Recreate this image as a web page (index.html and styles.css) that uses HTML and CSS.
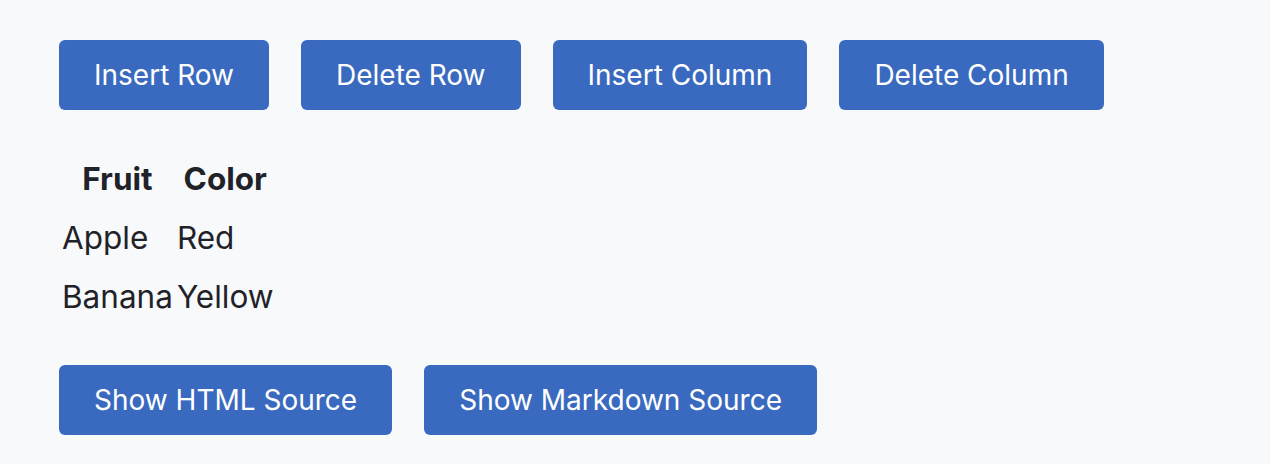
FILE: index.html
```html
<!DOCTYPE html>
<html>
<head>
<meta charset="utf-8">
<link rel="stylesheet" href="styles.css">
</head>
<body>
<div class="page">
  <div class="toolbar">
    <button class="btn">Insert Row</button>
    <button class="btn">Delete Row</button>
    <button class="btn">Insert Column</button>
    <button class="btn">Delete Column</button>
  </div>
  <table class="grid">
    <thead>
      <tr><th>Fruit</th><th>Color</th></tr>
    </thead>
    <tbody>
      <tr><td>Apple</td><td>Red</td></tr>
      <tr><td>Banana</td><td>Yellow</td></tr>
    </tbody>
  </table>
  <div class="toolbar">
    <button class="btn">Show HTML Source</button>
    <button class="btn">Show Markdown Source</button>
  </div>
</div>
</body>
</html>
```

FILE: styles.css
```css
html, body {
  margin: 0;
  padding: 0;
  background: #f8f9fb;
}
body {
  font-family: Inter, "Noto Sans", sans-serif;
  color: #1f2329;
}
.page {
  padding: 40px 59px;
  display: flex;
  flex-direction: column;
  align-items: flex-start;
}
.toolbar {
  display: flex;
  gap: 32px;
}
.btn {
  height: 70px;
  padding: 0 35px;
  background: #3a6abf;
  color: #ffffff;
  border: none;
  border-radius: 6px;
  font-family: Inter, "Noto Sans", sans-serif;
  font-size: 28px;
}
.grid {
  border-collapse: separate;
  border-spacing: 2px;
  margin: 38px 0;
  font-size: 31.5px;
}
.grid th, .grid td {
  padding: 9px 1px;
  text-align: left;
}
.grid th {
  text-align: center;
  font-weight: 700;
}
```
